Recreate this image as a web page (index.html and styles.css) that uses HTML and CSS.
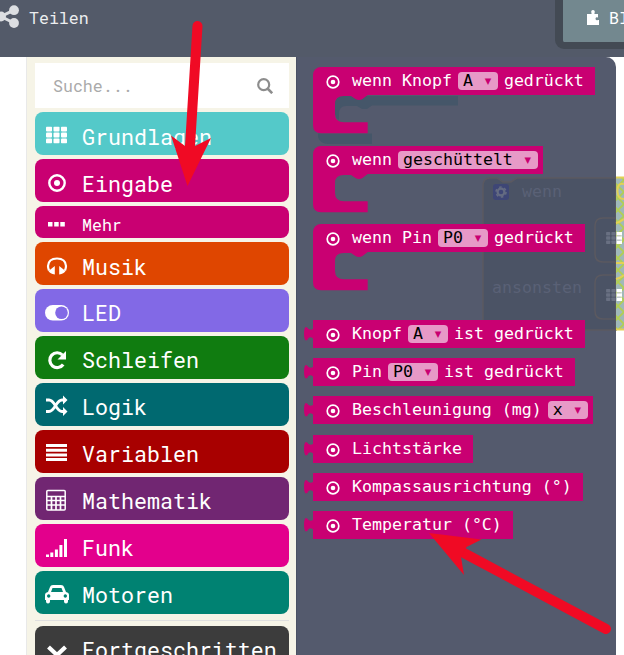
FILE: index.html
```html
<!DOCTYPE html>
<html lang="de">
<head>
<meta charset="utf-8">
<title>Editor</title>
<link rel="stylesheet" href="styles.css">
</head>
<body>
<svg width="0" height="0" class="defs">
  <symbol id="target" viewBox="0 0 18 18"><circle cx="9" cy="9" r="7.700" fill="none" stroke="currentColor" stroke-width="2.400"/><circle cx="9" cy="9" r="3" fill="currentColor"/></symbol>
  <symbol id="bt" viewBox="0 0 14 14"><circle cx="7" cy="7" r="5.800" fill="none" stroke="currentColor" stroke-width="1.700"/><circle cx="7" cy="7" r="2.300" fill="currentColor"/></symbol>
  <symbol id="grid" viewBox="0 0 21 17"><g fill="currentColor"><rect width="6" height="5" rx="1"/><rect x="7.5" width="6" height="5" rx="1"/><rect x="15" width="6" height="5" rx="1"/><rect y="6" width="6" height="5" rx="1"/><rect x="7.5" y="6" width="6" height="5" rx="1"/><rect x="15" y="6" width="6" height="5" rx="1"/><rect y="12" width="6" height="5" rx="1"/><rect x="7.5" y="12" width="6" height="5" rx="1"/><rect x="15" y="12" width="6" height="5" rx="1"/></g></symbol>
  <symbol id="mouth" viewBox="0 0 55 39"><path fill="currentColor" d="M0 0H54.700L49.500 4Q48 5 46 5Q44 5 42.500 4L38 1H31Q22 1 22 9V19Q22 27.300 31 27.300H54.700V38.300H8Q0 38.300 0 30.300Z"/></symbol>
  <symbol id="tab" viewBox="0 0 9 16"><path fill="currentColor" d="M9 3Q6.500 4.500 4.500 3Q3.300 1 1.800 1Q0 2 0 7.500Q0 13.500 1.800 14.500Q3.500 14.500 4.500 12Q6.500 10.500 9 12.500Z"/></symbol>
  <pattern id="weave" width="12" height="12" patternUnits="userSpaceOnUse"><rect width="12" height="12" fill="#a0b9b9"/><path d="M0 0 12 12M12 0 0 12" stroke="#b2cf52" stroke-width="1.800"/></pattern>
</svg>
<header class="topbar">
  <svg class="share" viewBox="0 0 20 24"><path d="M14 5.200 1 11.500 14 18" fill="none" stroke="#dcdee2" stroke-width="3"/><g fill="#dcdee2"><circle cx="14" cy="5.200" r="4.900"/><circle cx="1" cy="11.500" r="4.900"/><circle cx="14" cy="18" r="4.900"/></g></svg>
  <span class="share-label">Teilen</span>
  <div class="tabs"><svg class="puzzle" viewBox="0 0 12 15"><path fill="#fff" d="M0 4H4.300Q5 3.500 4.300 2.500Q3.800 0 6 0Q8.200 0 7.700 2.500Q7 3.500 7.700 4H11V7.500Q9 6.500 8.500 8.500Q8.500 11 11 10H12V15H0Z"/></svg><span>Blöcke</span></div>
</header>
<main class="workspace">
  <aside class="toolbox">
    <div class="search"><span>Suche...</span><svg viewBox="0 0 16 16"><circle cx="6.700" cy="6.700" r="5.500" fill="none" stroke="#8d8d8d" stroke-width="2.200"/><path d="m10.500 10.500 4.700 4.700" stroke="#8d8d8d" stroke-width="2.600"/></svg></div>
    <div class="cat basic"><svg viewBox="-1 -2.500 24 24"><use href="#grid" width="21" height="17"/></svg><span>Grundlagen</span></div>
    <div class="cat input"><svg viewBox="0 0 24 24"><use href="#target" x="3" y="3" width="18" height="18"/></svg><span>Eingabe</span></div>
    <div class="cat input more"><svg viewBox="0 0 24 24"><path fill="#fff" d="M3 10h4.500v4.500H3zM9.200 10h4.500v4.500H9.200zM15.300 10h4.500v4.500h-4.500z"/></svg><span>Mehr</span></div>
    <div class="cat music"><svg viewBox="0 0 24 24"><path d="M4 16.500Q3 14 3 12Q3.500 4.500 12 4.500T21 12Q21 14 20 16.500" fill="none" stroke="#fff" stroke-width="2.200"/><path fill="#fff" d="M9.800 12V20.500Q5 19.500 3.500 17ZM14.200 12V20.500Q19 19.500 20.500 17Z"/></svg><span>Musik</span></div>
    <div class="cat led"><svg viewBox="0 0 24 24"><rect y="4" width="24" height="15.500" rx="7.750" fill="#fff"/><circle cx="16.500" cy="11.750" r="6.300" fill="#8269e6"/></svg><span>LED</span></div>
    <div class="cat loops"><svg viewBox="0 0 24 24"><path d="M18.200 16.500A7.400 7.400 0 1 1 17.500 7" fill="none" stroke="#fff" stroke-width="3.200"/><path fill="#fff" d="M21 3v8.500h-8.500z"/></svg><span>Schleifen</span></div>
    <div class="cat logic"><svg viewBox="0 1 24 24"><path d="M1 6h3C10 6 11 17.500 17 17.500h2M1 17.500h3C10 17.500 11 6 17 6h2" fill="none" stroke="#fff" stroke-width="2.800"/><path fill="#fff" d="m18 1.500 4.500 4.500-4.500 4.500zM18 13l4.500 4.500L18 22z"/></svg><span>Logik</span></div>
    <div class="cat vars"><svg viewBox="0 1 24 24"><path fill="#fff" d="M1 3h21v3H1zM1 7.700h21v3H1zM1 12.400h21v3H1zM1 17h21v3H1z"/></svg><span>Variablen</span></div>
    <div class="cat math"><svg viewBox="0 1 24 24"><rect x="1.800" y="2.500" width="18.400" height="19.500" rx="1" fill="none" stroke="#fff" stroke-width="1.500"/><path d="M2 8.500h18M2 12.500h18M2 17h18M6.500 8.500V22M11 8.500V22M15.500 8.500V22" stroke="#fff" stroke-width="1.700"/></svg><span>Mathematik</span></div>
    <div class="cat radio"><svg viewBox="0 0 24 24"><path fill="#fff" d="M1 18.500h3V21H1zM5.300 16.500h3V21h-3zM9.900 13.500h3V21h-3zM14.400 9h3v12h-3zM19 3h3v18h-3z"/></svg><span>Funk</span></div>
    <div class="cat motors"><svg viewBox="0 0 24 24"><path fill="#fff" fill-rule="evenodd" d="M0 17V12Q0 9.500 3 9L5 4Q5.500 2 8 2H16Q18.500 2 19 4L21 9Q24 9.500 24 12V17H23V18.500Q23 20.500 21 20.500T19 18.500V17H5V18.500Q5 20.500 3 20.500T1 18.500V17ZM6 9H18L16.500 5H7.500ZM3.700 11.300A1.700 1.700 0 1 0 3.710 11.300ZM20.300 11.300A1.700 1.700 0 1 0 20.310 11.300Z"/></svg><span>Motoren</span></div>
    <hr>
    <div class="cat advanced"><svg viewBox="0 0 24 24"><path d="m3.500 9 8.500 8 8.500-8" fill="none" stroke="#fff" stroke-width="4.200"/></svg><span>Fortgeschritten</span></div>
  </aside>
  <section class="flyout">
    <div class="event"><div class="row"><svg><use href="#bt"/></svg><span>wenn Knopf</span><b>A <i>▾</i></b><span>gedrückt</span></div><svg class="mouth"><use href="#mouth"/></svg></div>
    <div class="event"><div class="row"><svg><use href="#bt"/></svg><span>wenn</span><b>geschüttelt <i>▾</i></b></div><svg class="mouth"><use href="#mouth"/></svg></div>
    <div class="event last"><div class="row"><svg><use href="#bt"/></svg><span>wenn Pin</span><b>P0 <i>▾</i></b><span>gedrückt</span></div><svg class="mouth"><use href="#mouth"/></svg></div>
    <div class="value"><svg class="tab"><use href="#tab"/></svg><div class="row"><svg><use href="#bt"/></svg><span>Knopf</span><b>A <i>▾</i></b><span>ist gedrückt</span></div></div>
    <div class="value"><svg class="tab"><use href="#tab"/></svg><div class="row"><svg><use href="#bt"/></svg><span>Pin</span><b>P0 <i>▾</i></b><span>ist gedrückt</span></div></div>
    <div class="value"><svg class="tab"><use href="#tab"/></svg><div class="row"><svg><use href="#bt"/></svg><span>Beschleunigung (mg)</span><b>x <i>▾</i></b></div></div>
    <div class="value"><svg class="tab"><use href="#tab"/></svg><div class="row"><svg><use href="#bt"/></svg><span>Lichtstärke</span></div></div>
    <div class="value"><svg class="tab"><use href="#tab"/></svg><div class="row"><svg><use href="#bt"/></svg><span>Kompassausrichtung (°)</span></div></div>
    <div class="value"><svg class="tab"><use href="#tab"/></svg><div class="row"><svg><use href="#bt"/></svg><span>Temperatur (°C)</span></div></div>
  </section>
</main>
<svg class="behind" viewBox="0 0 624 655">
  <path fill="#455669" d="M335 103Q335 96 343 96H458V105.500H372L367 109H362L357 106H346Q339 106 339 114V120Q335 118 335 113ZM318 133.500H372V144H328Q320 144 318 137Z"/>
  <path fill="#4b5365" stroke="#5b5960" stroke-width="1.500" d="M616 178H517L511 182H503L497 178H490Q483 178 483 186V330H616Z"/>
  <g fill="none" stroke="#5b5960" stroke-width="1.500"><path d="M616 218H603Q595 218 595 226V254Q595 262 603 262H616M616 275H603Q595 275 595 283V311Q595 319 603 319H616"/></g>
  <rect x="493" y="184" width="16" height="16" rx="3" fill="#3e4676"/>
  <circle cx="501" cy="192" r="3.400" fill="none" stroke="#646b82" stroke-width="2.200"/><circle cx="501" cy="192" r="5" fill="none" stroke="#646b82" stroke-width="1.600" stroke-dasharray="2.600 2.640"/>
  <g class="ghost-text"><text x="522" y="197">wenn</text><text x="492" y="293">ansonsten</text></g>
  <rect x="616" y="177" width="8" height="153" fill="url(#weave)"/>
  <path fill="none" stroke="#e3d154" stroke-width="2" d="M616 177.500H624M616 329.500H624M624 184Q617 182 617.500 192Q618 199 624 199M616 223Q620 222 624 219M616 263H624M616 279Q620 278 624 275"/>
  <g color="#697082"><use href="#grid" x="606" y="232" width="15" height="12"/><use href="#grid" x="606" y="289" width="15" height="12"/></g>
  <path fill="#fff" d="M616.500 232H622v3.500h-5.500zM616.500 236.300H622v3.500h-5.500zM616.500 240.600H622v3.500h-5.500zM616.500 289H622v3.500h-5.500zM616.500 293.300H622v3.500h-5.500zM616.500 297.600H622v3.500h-5.500z"/>
</svg>
<svg class="arrows" viewBox="0 0 624 655"><g fill="#f00a24" stroke="#f00a24"><path d="M197.500 26 190 146M606 629 462 552" stroke-width="10" stroke-linecap="round" fill="none"/><path stroke="none" d="M187.500 186 171 135.500 185 146H195L211 138ZM429 533 481.500 539.500 466.500 547 461 557 464 575Z"/></g></svg>
</body>
</html>
```
FILE: styles.css
```css
* { box-sizing: border-box; }
body { margin: 0; width: 624px; height: 655px; overflow: hidden; position: relative; background: #fff; font-family: "Roboto Mono", "DejaVu Sans Mono", monospace; }
.defs { position: absolute; }
.topbar { height: 57px; background: #535a69; display: flex; color: #eceef0; font-size: 16.600px; }
.share { width: 20px; height: 24px; margin-top: 5px; overflow: visible; }
.share-label { margin: 7px 0 0 9px; line-height: 22px; }
.tabs { margin-left: auto; width: 69px; height: 49px; border: solid #434a54; border-width: 0 0 7px 8px; border-radius: 0 0 0 9px; background: #73888f; display: flex; overflow: hidden; color: #fff; }
.puzzle { flex: none; width: 12px; height: 15px; margin: 10px 10px 0 24px; }
.tabs span { line-height: 36px; }
.workspace { display: flex; height: 598px; padding-left: 26px; }
.toolbox { width: 270px; flex: none; background: #f6f4e7; border-left: 1px solid #e9e9e9; padding: 6px 7px 0 8px; display: flex; flex-direction: column; gap: 4px; }
.search { height: 45px; flex: none; background: #fff; display: flex; align-items: center; justify-content: space-between; padding: 1px 16px 0 18px; color: #aaa; font-size: 16.600px; }
.search svg { width: 16px; height: 16px; }
.search span { margin-top: -2px; }
.cat { height: 43px; flex: none; border-radius: 8px; display: flex; align-items: center; gap: 13px; padding-left: 10px; color: #fff; font-size: 21.650px; }
.cat svg { width: 24px; height: 24px; margin-top: 4px; }
.cat span { padding-top: 5px; }
.led span, .loops span, .logic span, .vars span, .math span, .radio span, .motors span, .advanced span { padding-top: 3px; }
.cat.more { height: 32px; font-size: 16.600px; }
.basic { background: #54c9c9; }
.input { background: #c90072; }
.music { background: #df4600; }
.led { background: #8269e6; }
.loops { background: #107c10; }
.logic { background: #006970; }
.vars { background: #a80000; }
.math { background: #712672; }
.radio { background: #e3008c; }
.motors { background: #008272; }
.advanced { background: #3c3c3c; }
hr { width: 100%; margin: 2px 0 1px; border: 0; border-top: 1px solid #dfdfdf; flex: none; }
.flyout { width: 320px; background: #545a6d; border-radius: 0 10px 0 0; padding: 10px 0 0 17px; box-shadow: inset 1px 0 #4b5164; }
.event { height: 78.500px; color: #c90072; position: relative; z-index: 2; }
.event.last { height: 96px; }
.row { display: flex; align-items: center; width: max-content; height: 28px; background: #c90072; color: #fff; font: 16.600px "DejaVu Sans Mono", monospace; padding: 0 11.500px 0 12px; }
.row span { margin-top: -1px; }
.event .row { border-top-left-radius: 8px; }
.row svg { width: 14px; height: 14px; margin: 2px 12.500px 0 .500px; }
.row b { font-weight: normal; color: #000; background: #e799c7; border-radius: 4px; height: 18px; line-height: 17px; padding: 0 5px; margin: 0 6px; }
.row b:last-child { margin-right: -6px; }
.row i { font-style: normal; color: #c90072; }
.mouth { display: block; width: 55px; height: 39px; }
.value { height: 38.200px; position: relative; z-index: 2; color: #c90072; }
.tab { position: absolute; left: -9px; top: 6px; width: 9px; height: 16px; }
.behind, .arrows { position: absolute; left: 0; top: 0; width: 624px; height: 655px; }
.behind { z-index: 1; }
.arrows { z-index: 3; }
.ghost-text { font: 16.600px "DejaVu Sans Mono", monospace; fill: #5a6176; }
```
